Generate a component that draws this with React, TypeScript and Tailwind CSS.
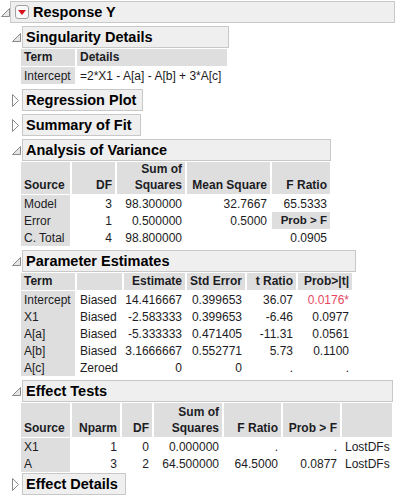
import React from "react";

const OpenTri = () => (
  <svg width="9" height="9" viewBox="0 0 9 9" className="block">
    <polygon points="8.5,0.5 8.5,8.5 0.5,8.5" fill="#e6e6e6" stroke="#8a8a8a" strokeWidth="1" />
  </svg>
);

const ClosedTri = () => (
  <svg width="7" height="13" viewBox="0 0 7 13" className="block">
    <polygon points="0.5,0.5 6.5,6.5 0.5,12.5" fill="#ffffff" stroke="#8a8a8a" strokeWidth="1" />
  </svg>
);

const Header = ({ title, w }: { title: string; w: string }) => (
  <div
    className={`${w} h-[22px] border border-[#c8c8c8] bg-[#efefef] flex items-center pl-[3px] font-bold text-[14.5px] text-[#000] leading-none`}
  >
    {title}
  </div>
);

type Align = "l" | "r";

function HeadCell({ children, a, h }: { children?: React.ReactNode; a: Align; h: string }) {
  return (
    <div
      className={`${h} mb-[1px] bg-[#dedede] font-bold flex flex-col justify-end px-[3px] leading-[16px] pb-[1px] ${
        a === "r" ? "items-end text-right" : "items-start text-left"
      }`}
    >
      {children}
    </div>
  );
}

function Cell({ children, a, gray, red }: { children?: React.ReactNode; a: Align; gray?: boolean; red?: boolean }) {
  return (
    <div
      className={`h-[17px] flex items-center px-[3px] whitespace-nowrap ${gray ? "bg-[#dedede]" : ""} ${
        a === "r" ? "justify-end" : "justify-start"
      } ${red ? "text-[#e6475f]" : ""}`}
    >
      {children}
    </div>
  );
}

function Section({
  title,
  w,
  open,
  children,
  mt,
}: {
  title: string;
  w: string;
  open?: boolean;
  children?: React.ReactNode;
  mt: string;
}) {
  return (
    <div className={`${mt} ml-[12px]`}>
      <div className="flex items-center">
        <div className="w-[10px] flex justify-start">{open ? <OpenTri /> : <ClosedTri />}</div>
        <Header title={title} w={w} />
      </div>
      {children && <div className="ml-[9px] mt-[1px]">{children}</div>}
    </div>
  );
}

export default function App() {
  return (
    <div
      className="w-[395px] h-[500px] bg-white overflow-hidden text-[12px] text-[#1c1c24]"
      style={{ fontFamily: '"Liberation Sans", Arial, sans-serif' }}
    >
      <div className="pt-[1px] flex items-center">
        <div className="w-[10px] pl-[1px]">
          <OpenTri />
        </div>
        <div className="w-[390px] h-[22px] border border-[#c8c8c8] bg-[#efefef] flex items-center pl-[4px] gap-[4px]">
          <div className="w-[14px] h-[14px] rounded-[3px] border border-[#a0a0a0] bg-[#fafafa] flex items-center justify-center">
            <svg width="8" height="5" viewBox="0 0 8 5">
              <polygon points="0,0 8,0 4,5" fill="#d8101c" />
            </svg>
          </div>
          <span className="font-bold text-[14.5px] text-black leading-none">Response Y</span>
        </div>
      </div>

      <Section title="Singularity Details" w="w-[207px]" open mt="mt-[3px]">
        <div className="grid grid-cols-[54px_150px] gap-x-[2px]">
          <HeadCell a="l" h="h-[17px]">Term</HeadCell>
          <HeadCell a="l" h="h-[17px]">Details</HeadCell>
          <Cell a="l" gray>Intercept</Cell>
          <Cell a="l">=2*X1 - A[a] - A[b] + 3*A[c]</Cell>
        </div>
      </Section>

      <Section title="Regression Plot" w="w-[121px]" mt="mt-[5px]" />
      <Section title="Summary of Fit" w="w-[119px]" mt="mt-[3px]" />

      <Section title="Analysis of Variance" w="w-[309px]" open mt="mt-[3px]">
        <div className="grid grid-cols-[49px_43px_68px_83px_58px] gap-x-[2px]">
          <HeadCell a="l" h="h-[32px]">Source</HeadCell>
          <HeadCell a="r" h="h-[32px]">DF</HeadCell>
          <HeadCell a="r" h="h-[32px]">
            <span>Sum of</span>
            <span>Squares</span>
          </HeadCell>
          <HeadCell a="r" h="h-[32px]">Mean Square</HeadCell>
          <HeadCell a="r" h="h-[32px]">F Ratio</HeadCell>

          <Cell a="l" gray>Model</Cell>
          <Cell a="r">3</Cell>
          <Cell a="r">98.300000</Cell>
          <Cell a="r">32.7667</Cell>
          <Cell a="r">65.5333</Cell>

          <Cell a="l" gray>Error</Cell>
          <Cell a="r">1</Cell>
          <Cell a="r">0.500000</Cell>
          <Cell a="r">0.5000</Cell>
          <Cell a="r" gray>
            <span className="font-bold text-[11.5px]">Prob &gt; F</span>
          </Cell>

          <Cell a="l" gray>C. Total</Cell>
          <Cell a="r">4</Cell>
          <Cell a="r">98.800000</Cell>
          <Cell a="r"></Cell>
          <Cell a="r">0.0905</Cell>
        </div>
      </Section>

      <Section title="Parameter Estimates" w="w-[334px]" open mt="mt-[4px]">
        <div className="grid grid-cols-[54px_45px_61px_58px_49px_54px] gap-x-[2px]">
          <HeadCell a="l" h="h-[17px]">Term</HeadCell>
          <HeadCell a="l" h="h-[17px]"></HeadCell>
          <HeadCell a="r" h="h-[17px]">Estimate</HeadCell>
          <HeadCell a="r" h="h-[17px]">Std Error</HeadCell>
          <HeadCell a="r" h="h-[17px]">t Ratio</HeadCell>
          <HeadCell a="r" h="h-[17px]">Prob&gt;|t|</HeadCell>

          {[
            ["Intercept", "Biased", "14.416667", "0.399653", "36.07", "0.0176*"],
            ["X1", "Biased", "-2.583333", "0.399653", "-6.46", "0.0977"],
            ["A[a]", "Biased", "-5.333333", "0.471405", "-11.31", "0.0561"],
            ["A[b]", "Biased", "3.1666667", "0.552771", "5.73", "0.1100"],
            ["A[c]", "Zeroed", "0", "0", ".", "."],
          ].map((r, i) => (
            <React.Fragment key={i}>
              <Cell a="l" gray>{r[0]}</Cell>
              <Cell a="l">{r[1]}</Cell>
              <Cell a="r">{r[2]}</Cell>
              <Cell a="r">{r[3]}</Cell>
              <Cell a="r">{r[4]}</Cell>
              <Cell a="r" red={i === 0}>{r[5]}</Cell>
            </React.Fragment>
          ))}
        </div>
      </Section>

      <Section title="Effect Tests" w="w-[371px]" open mt="mt-[4px]">
        <div className="grid grid-cols-[49px_48px_30px_68px_57px_57px_50px] gap-x-[2px]">
          <HeadCell a="l" h="h-[34px]">Source</HeadCell>
          <HeadCell a="r" h="h-[34px]">Nparm</HeadCell>
          <HeadCell a="r" h="h-[34px]">DF</HeadCell>
          <HeadCell a="r" h="h-[34px]">
            <span>Sum of</span>
            <span>Squares</span>
          </HeadCell>
          <HeadCell a="r" h="h-[34px]">F Ratio</HeadCell>
          <HeadCell a="r" h="h-[34px]">Prob &gt; F</HeadCell>
          <HeadCell a="l" h="h-[34px]"></HeadCell>

          <Cell a="l" gray>X1</Cell>
          <Cell a="r">1</Cell>
          <Cell a="r">0</Cell>
          <Cell a="r">0.000000</Cell>
          <Cell a="r">.</Cell>
          <Cell a="r">.</Cell>
          <Cell a="l">LostDFs</Cell>

          <Cell a="l" gray>A</Cell>
          <Cell a="r">3</Cell>
          <Cell a="r">2</Cell>
          <Cell a="r">64.500000</Cell>
          <Cell a="r">64.5000</Cell>
          <Cell a="r">0.0877</Cell>
          <Cell a="l">LostDFs</Cell>
        </div>
      </Section>

      <Section title="Effect Details" w="w-[104px]" mt="mt-[1px]" />
    </div>
  );
}
